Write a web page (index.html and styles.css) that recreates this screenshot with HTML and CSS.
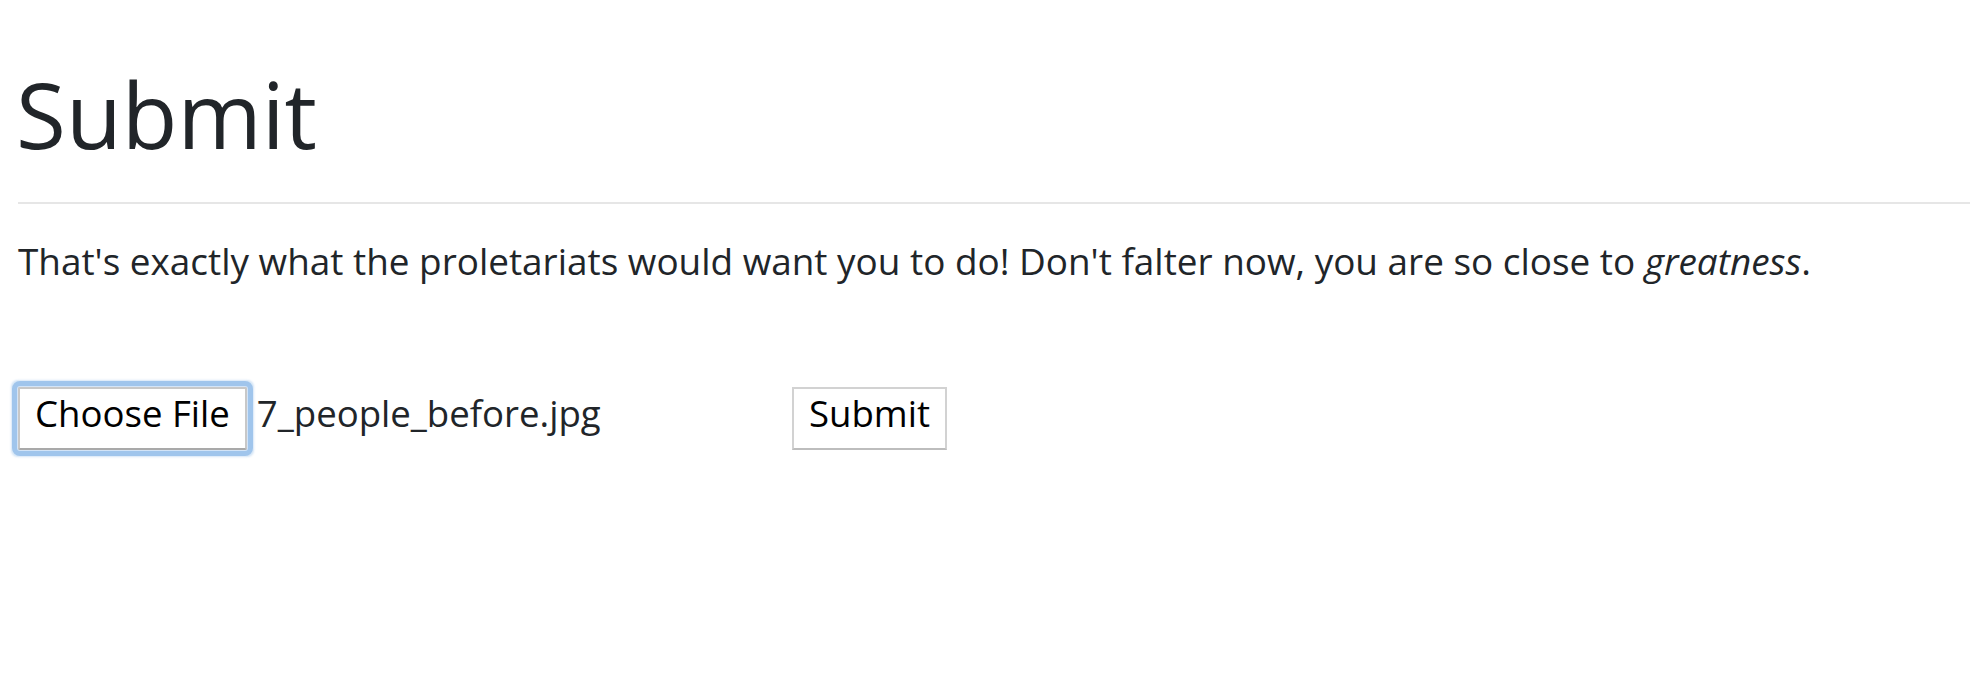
FILE: index.html
```html
<!DOCTYPE html>
<html lang="en">
<head>
<meta charset="utf-8">
<title>Submit</title>
<link rel="stylesheet" href="styles.css">
</head>
<body>
<main class="page">
  <h1 class="title">Submit</h1>
  <hr class="divider">
  <p class="lead">That's exactly what the proletariats would want you to do! Don't falter now, you are so close to <em>greatness</em>.</p>
  <form class="upload">
    <div class="file-input">
      <button type="button" class="btn btn-focus">Choose File</button>
      <span class="file-name">7_people_before.jpg</span>
    </div>
    <button type="button" class="btn">Submit</button>
  </form>
</main>
</body>
</html>
```
FILE: styles.css
```css
html, body {
  margin: 0;
  padding: 0;
  background: #fff;
}

.page {
  padding-left: 18px;
  font-family: "Open Sans", "Noto Sans", sans-serif;
  color: #212529;
}

.title {
  margin: 60px 0 34px;
  font-size: 91px;
  line-height: 108px;
  font-weight: 400;
  text-indent: -2px;
}

.divider {
  margin: 0;
  height: 0;
  border: 0;
  border-top: 2px solid #e6e6e6;
}

.lead {
  margin: 30px 0 0;
  font-size: 36.9px;
  line-height: 55px;
}

.upload {
  display: flex;
  align-items: baseline;
  margin-top: 98px;
  padding-bottom: 20px;
}

.file-input {
  display: flex;
  align-items: baseline;
  gap: 10px;
  width: 774px;
}

.file-name {
  font-size: 36.6px;
  line-height: 40px;
}

.btn {
  box-sizing: border-box;
  height: 63px;
  margin: 0;
  padding: 0 15px 11px;
  font-family: "Open Sans", "Noto Sans", sans-serif;
  font-size: 36.6px;
  line-height: 40px;
  color: #000;
  background: #fff;
  border: 2px solid #d2d2d2;
  border-bottom-color: #bdbdbd;
  border-radius: 0;
  appearance: none;
}

.btn-focus {
  position: relative;
  border-color: #c8c8c8;
  border-bottom-color: #a9a9a9;
  border-radius: 2px;
  outline: 5px solid #a0c5ec;
  outline-offset: 1px;
  box-shadow: 0 0 0 1px #d3e4f7, 0 0 2px 7px rgba(160, 197, 236, 0.45);
}
```
